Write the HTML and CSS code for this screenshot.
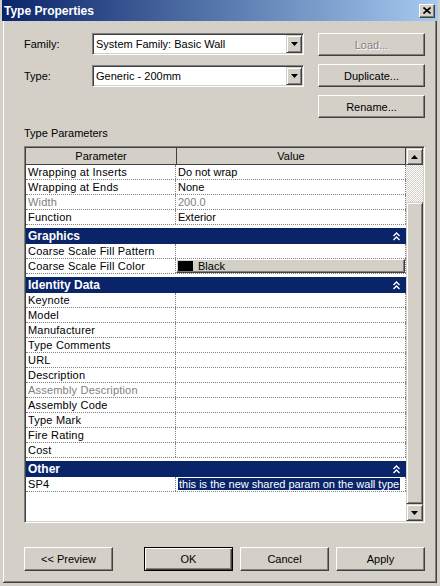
FILE: index.html
```html
<!DOCTYPE html>
<html lang="en">
<head>
    <meta charset="UTF-8">
    <title>Type Properties</title>
    <link rel="stylesheet" href="styles.css">
</head>
<body>
    <div class="window">
        <div class="titlebar">
            <span class="title">Type Properties</span>
            <span class="close-btn">
                <svg width="8" height="7" viewBox="0 0 8 7"><path d="M0.5 0.5 L7.5 6.5 M7.5 0.5 L0.5 6.5" stroke="#000" stroke-width="1.6" fill="none"/></svg>
            </span>
        </div>

        <div class="content">
            <div class="top">
                <div class="fields">
                    <div class="field">
                        <label>Family:</label>
                        <div class="combo">
                            <span class="combo-text">System Family: Basic Wall</span>
                            <span class="combo-btn"><svg width="7" height="4" viewBox="0 0 7 4"><path d="M0 0 H7 L3.5 4 Z" fill="#000"/></svg></span>
                        </div>
                    </div>
                    <div class="field">
                        <label>Type:</label>
                        <div class="combo">
                            <span class="combo-text">Generic - 200mm</span>
                            <span class="combo-btn"><svg width="7" height="4" viewBox="0 0 7 4"><path d="M0 0 H7 L3.5 4 Z" fill="#000"/></svg></span>
                        </div>
                    </div>
                </div>
                <div class="side">
                    <button class="btn" disabled>Load...</button>
                    <button class="btn">Duplicate...</button>
                    <button class="btn">Rename...</button>
                </div>
            </div>

            <div class="section-label">Type Parameters</div>

            <div class="grid-box">
                <div class="table">
                    <div class="head">
                        <div class="hp">Parameter</div>
                        <div class="hv">Value</div>
                    </div>

                    <div class="row"><div class="p">Wrapping at Inserts</div><div class="v">Do not wrap</div></div>
                    <div class="row"><div class="p">Wrapping at Ends</div><div class="v">None</div></div>
                    <div class="row dim"><div class="p">Width</div><div class="v">200.0</div></div>
                    <div class="row"><div class="p">Function</div><div class="v">Exterior</div></div>

                    <div class="group"><span>Graphics</span><svg class="chev" width="7" height="9" viewBox="0 0 7 9"><path d="M0.5 4 L3.5 1 L6.5 4 M0.5 8 L3.5 5 L6.5 8" stroke="#fff" stroke-width="1.4" fill="none"/></svg></div>
                    <div class="row"><div class="p">Coarse Scale Fill Pattern</div><div class="v"></div></div>
                    <div class="row"><div class="p">Coarse Scale Fill Color</div><div class="v"><span class="color-btn"><span class="swatch"></span>Black</span></div></div>

                    <div class="group"><span>Identity Data</span><svg class="chev" width="7" height="9" viewBox="0 0 7 9"><path d="M0.5 4 L3.5 1 L6.5 4 M0.5 8 L3.5 5 L6.5 8" stroke="#fff" stroke-width="1.4" fill="none"/></svg></div>
                    <div class="row"><div class="p">Keynote</div><div class="v"></div></div>
                    <div class="row"><div class="p">Model</div><div class="v"></div></div>
                    <div class="row"><div class="p">Manufacturer</div><div class="v"></div></div>
                    <div class="row"><div class="p">Type Comments</div><div class="v"></div></div>
                    <div class="row"><div class="p">URL</div><div class="v"></div></div>
                    <div class="row"><div class="p">Description</div><div class="v"></div></div>
                    <div class="row dim"><div class="p">Assembly Description</div><div class="v"></div></div>
                    <div class="row"><div class="p">Assembly Code</div><div class="v"></div></div>
                    <div class="row"><div class="p">Type Mark</div><div class="v"></div></div>
                    <div class="row"><div class="p">Fire Rating</div><div class="v"></div></div>
                    <div class="row"><div class="p">Cost</div><div class="v"></div></div>

                    <div class="group"><span>Other</span><svg class="chev" width="7" height="9" viewBox="0 0 7 9"><path d="M0.5 4 L3.5 1 L6.5 4 M0.5 8 L3.5 5 L6.5 8" stroke="#fff" stroke-width="1.4" fill="none"/></svg></div>
                    <div class="row"><div class="p">SP4</div><div class="v focus"><span class="selected">this is the new shared param on the wall type</span></div></div>
                </div>

                <div class="scrollbar">
                    <span class="sb-btn"><svg width="7" height="4" viewBox="0 0 7 4"><path d="M0 4 H7 L3.5 0 Z" fill="#000"/></svg></span>
                    <span class="sb-track"></span>
                    <span class="sb-thumb"></span>
                    <span class="sb-btn"><svg width="7" height="4" viewBox="0 0 7 4"><path d="M0 0 H7 L3.5 4 Z" fill="#000"/></svg></span>
                </div>
            </div>

            <div class="bottom">
                <button class="btn">&lt;&lt; Preview</button>
                <button class="btn default">OK</button>
                <button class="btn">Cancel</button>
                <button class="btn">Apply</button>
            </div>
        </div>
    </div>
</body>
</html>
```

FILE: styles.css
```css
body {
    margin: 0;
    font-family: "Liberation Sans", Arial, sans-serif;
    font-size: 11px;
    color: #000;
    background: #d4d0c8;
}
.window {
    width: 440px;
    height: 586px;
    box-sizing: border-box;
    background: #d4d0c8;
    border-left: 3px solid #d4d0c8;
    border-right: 3px solid #d4d0c8;
    border-bottom: 3px solid #d4d0c8;
    box-shadow: inset -1px -1px #404040, inset 1px 0 #ffffff, inset -2px -2px #808080;
    display: flex;
    flex-direction: column;
}
.titlebar {
    height: 21px;
    margin: 0 -1px;
    display: flex;
    align-items: center;
    justify-content: space-between;
    padding: 0 3px 0 2px;
    background: linear-gradient(to right, #0a246a, #a6caf0);
}
.title {
    color: #fff;
    font-weight: bold;
    font-size: 12px;
}
.close-btn {
    width: 16px;
    height: 14px;
    box-sizing: border-box;
    background: #d4d0c8;
    border: 1px solid;
    border-color: #fff #404040 #404040 #fff;
    box-shadow: inset -1px -1px #808080;
    display: flex;
    align-items: center;
    justify-content: center;
}

.content {
    padding: 12px 12px 0 21px;
}
.top {
    display: flex;
    height: 86px;
}
.fields {
    width: 280px;
    margin-right: 14px;
}
.field {
    display: flex;
    align-items: center;
    margin-bottom: 10px;
}
.field label {
    width: 68px;
}
.combo {
    width: 212px;
    height: 22px;
    box-sizing: border-box;
    background: #fff;
    border: 1px solid;
    border-color: #808080 #fff #fff #808080;
    box-shadow: inset 1px 1px #404040, inset -1px -1px #d4d0c8;
    padding: 1px;
    display: flex;
    align-items: center;
}
.combo-text {
    flex: 1;
    padding-left: 2px;
}
.combo-btn {
    width: 16px;
    height: 18px;
    box-sizing: border-box;
    background: #d4d0c8;
    border: 1px solid;
    border-color: #d4d0c8 #404040 #404040 #d4d0c8;
    box-shadow: inset 1px 1px #fff, inset -1px -1px #808080;
    display: flex;
    align-items: center;
    justify-content: center;
}
.side {
    width: 107px;
    display: flex;
    flex-direction: column;
    gap: 8px;
}

.btn {
    font-family: inherit;
    font-size: 11px;
    color: #000;
    height: 23px;
    padding: 0;
    background: #d4d0c8;
    border: 1px solid;
    border-color: #fff #404040 #404040 #fff;
    box-shadow: inset -1px -1px #808080;
}
.btn:disabled {
    color: #808080;
    text-shadow: 1px 1px #fff;
}
.btn.default {
    border-color: #000;
    box-shadow: inset 1px 1px #fff, inset -1px -1px #404040, inset -2px -2px #808080;
}

.section-label {
    margin-top: 8px;
    line-height: 13px;
}

.grid-box {
    margin-top: 6px;
    height: 377px;
    box-sizing: border-box;
    border: 1px solid;
    border-color: #808080 #fff #fff #808080;
    box-shadow: inset 1px 1px #404040, inset -1px -1px #d4d0c8;
    padding: 1px;
    display: flex;
    background: #fff;
}
.table {
    width: 380px;
    background: #fff;
}
.head {
    display: flex;
    height: 17px;
    line-height: 16px;
    background: #d4d0c8;
    box-sizing: border-box;
    border-bottom: 1px solid #404040;
    text-align: center;
}
.hp {
    width: 150px;
    border-right: 1px solid #404040;
}
.hv {
    flex: 1;
    border-right: 1px solid #404040;
}
.row {
    display: flex;
    height: 15px;
    line-height: 14px;
    box-sizing: border-box;
    border-bottom: 1px dotted #808080;
}
.p {
    width: 150px;
    padding-left: 2px;
    box-sizing: border-box;
    border-right: 1px dotted #808080;
    white-space: nowrap;
    letter-spacing: 0.2px;
}
.v {
    flex: 1;
    padding-left: 2px;
    border-right: 1px dotted #808080;
    white-space: nowrap;
    overflow: hidden;
}
.row.dim {
    color: #808080;
}
.group {
    margin-top: 3px;
    height: 16px;
    background: #0a246a;
    color: #fff;
    font-weight: bold;
    font-size: 12px;
    display: flex;
    align-items: center;
    justify-content: space-between;
    padding: 0 6px 0 2px;
}
.color-btn {
    display: flex;
    align-items: center;
    height: 14px;
    margin-left: -2px;
    box-sizing: border-box;
    background: #d4d0c8;
    border: 1px solid;
    border-color: #fff #404040 #404040 #fff;
    box-shadow: inset -1px -1px #808080;
    padding-left: 1px;
}
.swatch {
    width: 15px;
    height: 10px;
    background: #000;
    margin-right: 5px;
}
.selected {
    background: #0a246a;
    color: #fff;
    padding: 0 1px;
}

.scrollbar {
    width: 17px;
    display: flex;
    flex-direction: column;
}
.sb-btn {
    height: 17px;
    box-sizing: border-box;
    background: #d4d0c8;
    border: 1px solid;
    border-color: #d4d0c8 #404040 #404040 #d4d0c8;
    box-shadow: inset 1px 1px #fff, inset -1px -1px #808080;
    display: flex;
    align-items: center;
    justify-content: center;
}
.sb-track {
    height: 37px;
    background: repeating-conic-gradient(#fff 0 25%, #d4d0c8 0 50%) 0 0 / 2px 2px;
}
.sb-thumb {
    flex: 1;
    box-sizing: border-box;
    background: #d4d0c8;
    border: 1px solid;
    border-color: #d4d0c8 #404040 #404040 #d4d0c8;
    box-shadow: inset 1px 1px #fff, inset -1px -1px #808080;
}

.bottom {
    margin-top: 24px;
    display: flex;
    gap: 7px;
}
.bottom .btn {
    width: 89px;
    height: 24px;
}
.bottom .btn:first-child {
    margin-right: 24px;
}
```
